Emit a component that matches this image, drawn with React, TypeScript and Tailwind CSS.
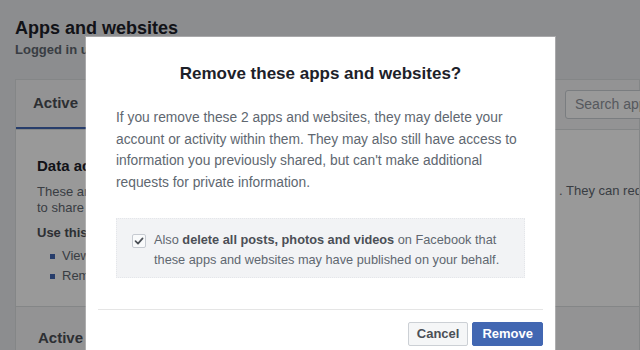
import React from 'react';

const Check = () => (
  <svg width="10" height="10" viewBox="0 0 10 10" fill="none">
    <path d="M1.5 5.2 L4 7.6 L8.6 2.4" stroke="#4b4f56" strokeWidth="1.7" strokeLinecap="round" strokeLinejoin="round" />
  </svg>
);

const App = () => {
  return (
    <div className="relative h-[350px] w-[640px] overflow-hidden bg-[#e9ebee] font-['Liberation_Sans',Arial,sans-serif]">
      {/* page behind the dialog */}
      <div className="pl-[15px] pt-[18px]">
        <h1 className="text-[18px] leading-[20px] font-bold text-[#1d2129]">Apps and websites</h1>
        <p className="mt-[4px] text-[13px] leading-[16px] font-bold text-[#606770]">Logged in using Facebook</p>

        <div className="mt-[21px] border border-[#dddfe2] bg-white">
          <div className="flex h-[50px] items-center justify-between border-b border-[#dddfe2] bg-[#f5f6f7]">
            <div className="flex h-full w-[90px] items-center border-b-2 border-[#4267b2] pl-[17px] text-[15px] font-bold text-[#4b4f56]">
              Active
            </div>
            <div className="mr-[-36px] flex h-[29px] w-[110px] items-center rounded-[3px] border border-[#ccd0d5] bg-white pl-[9px] text-[14px] text-[#90949c]">
              Search apps
            </div>
          </div>

          <div className="flex h-[177px] justify-between border-b border-[#dddfe2] pl-[21px] pt-[27px]">
            <div>
              <h2 className="text-[15px] leading-[18px] font-bold text-[#1d2129]">Data access</h2>
              <p className="mt-[9px] text-[13px] leading-[16px] text-[#606770]">
                These are apps and websites
                <br />
                to share
              </p>
              <p className="mt-[9px] text-[13px] leading-[16px] font-bold text-[#4b4f56]">Use this list to</p>
              <ul className="mt-[5px] pl-[13px] text-[13px] leading-[20px] text-[#606770]">
                <li className="flex items-center gap-[7px]"><span className="h-[5px] w-[5px] bg-[#4267b2]" />View</li>
                <li className="flex items-center gap-[7px]"><span className="h-[5px] w-[5px] bg-[#4267b2]" />Remove</li>
              </ul>
            </div>
            <p className="mt-[24px] w-[80px] overflow-hidden whitespace-nowrap text-[13px] text-[#606770]">. They can request</p>
          </div>

          <div className="h-[60px] bg-[#f5f6f7] pl-[22px] pt-[20px] text-[15px] font-bold text-[#4b4f56]">Active apps</div>
        </div>
      </div>

      {/* overlay */}
      <div className="absolute inset-0 bg-black/40" />

      {/* dialog */}
      <div className="absolute left-[86px] top-[37px] w-[469px] bg-white shadow-[0_0_0_1px_rgba(255,255,255,0.25)]">
        <div className="px-[30px] pt-[27px]">
          <h3 className="text-center text-[17px] leading-[20px] font-bold text-[#1d2129]">Remove these apps and websites?</h3>
          <p className="mt-[23px] text-[13.8px] leading-[21.7px] text-[#606770]">
            If you remove these 2 apps and websites, they may delete your account or activity within them. They may also still have access to information you previously shared, but can't make additional requests for private information.
          </p>
          <div className="mt-[24px] flex gap-[8px] border border-dotted border-[#e4e6ea] bg-[#f2f3f5] pb-[6px] pl-[15px] pr-[10px] pt-[11px]">
            <span className="mt-[4px] flex h-[14px] w-[14px] shrink-0 items-center justify-center rounded-[2px] border border-[#c6cad1] bg-[#f9fafb]">
              <Check />
            </span>
            <p className="text-[12.75px] leading-[20.5px] text-[#606770]">
              Also <span className="font-bold text-[#4b4f56]">delete all posts, photos and videos</span> on Facebook that these apps and websites may have published on your behalf.
            </p>
          </div>
        </div>
        <div className="mx-[12px] mt-[31px] flex justify-end gap-[4px] border-t border-[#e5e5e5] pt-[12px] pb-[12px]">
          <button className="h-[24px] rounded-[2px] border border-[#ccd0d5] bg-[#f5f6f7] px-[8px] text-[13px] font-bold text-[#4b4f56]">
            Cancel
          </button>
          <button className="h-[24px] rounded-[2px] border border-[#4267b2] bg-[#4267b2] px-[9px] text-[13px] font-bold text-white">
            Remove
          </button>
        </div>
      </div>
    </div>
  );
};

export default App;
